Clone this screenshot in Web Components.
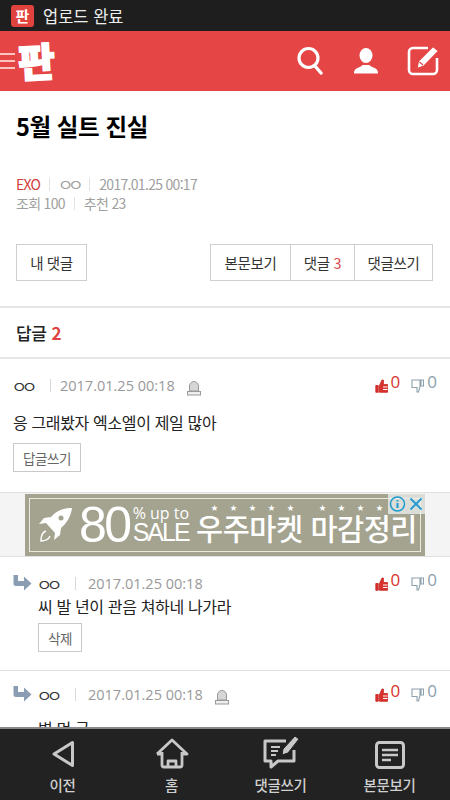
<!DOCTYPE html>
<html lang="ko">
<head>
<meta charset="utf-8">
<title>5월 실트 진실</title>
<style>
    html, body { margin: 0; padding: 0; background: #fff; }
    body { font-family: "Noto Sans CJK KR", "Noto Sans", sans-serif; }
    #page { display: flex; flex-direction: column; width: 450px; height: 800px; overflow: hidden; }
    #content { flex: 1; min-height: 0; overflow: hidden; }
</style>
</head>
<body>
<div id="page">
    <status-bar>업로드 완료</status-bar>
    <top-header></top-header>
    <div id="content">
        <post-head title-text="5월 실트 진실"></post-head>
        <post-tabs></post-tabs>
        <reply-title count="2">답글</reply-title>
        <comment-item date="2017.01.25 00:18" action="답글쓰기" alarm style="--top:17px;--body-gap:17px;--btn-gap:9px;--sep-left:15px;--date-gap:9px">응 그래봤자 엑소엘이 제일 많아</comment-item>
        <ad-banner></ad-banner>
        <comment-item nested date="2017.01.25 00:18" action="삭제" style="--top:17px;--body-gap:3px;--btn-gap:5px;--bottom:18px;--sep-left:15px;--date-gap:12px">씨 발 년이 관음 쳐하네 나가라</comment-item>
        <comment-item nested alarm date="2017.01.25 00:18" style="--top:14px;--body-gap:14px;--sep-left:15px;--date-gap:12px;border:0">병 먼 글</comment-item>
    </div>
    <bottom-nav></bottom-nav>
</div>

<script>
(function () {
    const icons = {
        search: '<svg width="26" height="30" viewBox="0 0 26 30"><circle cx="11.500" cy="12" r="9.500" fill="none" stroke="#fff" stroke-width="3.200"/><path d="M18 20l6 7" stroke="#fff" stroke-width="3.400" stroke-linecap="round"/></svg>',
        user: '<svg width="26" height="26" viewBox="0 0 26 26"><ellipse cx="13" cy="7.500" rx="6.500" ry="7.500" fill="#fff"/><path d="M1 25.500c0-1 0-3.500 2.500-5 3-1.600 5-1.600 6-3.500h7c1 1.900 3 1.900 6 3.500 2.500 1.500 2.500 4 2.500 5z" fill="#fff"/></svg>',
        write: '<svg width="32" height="30" viewBox="0 0 32 30"><path d="M21 2H6a4 4 0 0 0-4 4v18a4 4 0 0 0 4 4h20a4 4 0 0 0 4-4V12" fill="none" stroke="#fff" stroke-width="2.600"/><path d="M26 .5l5.500 4.500L17 20l-7 2.500 1.500-7.500z" fill="#fff" stroke="#e54545" stroke-width="1.200"/><path d="M12.500 16l3.500 3" stroke="#e54545" stroke-width="1.200"/></svg>',
        back: '<svg width="24" height="30" viewBox="0 0 24 30"><path d="M21.500 3.500v23L3 15z" fill="none" stroke="#c8c8c8" stroke-width="3" stroke-linejoin="round"/></svg>',
        home: '<svg width="34" height="31" viewBox="0 0 34 31"><path d="M2 16L17 2l15 14H27M7 16H2M7 14v13a2 2 0 0 0 2 2h16a2 2 0 0 0 2-2V14M13 29v-6h8v6" fill="none" stroke="#c8c8c8" stroke-width="2.800" stroke-linejoin="round"/></svg>',
        comment: '<svg width="38" height="34" viewBox="0 0 38 34"><path d="M24 6H3v20h6v6l7-6h16V15" fill="none" stroke="#c8c8c8" stroke-width="3" stroke-linejoin="round"/><path d="M9 12h9M9 16h7M9 20h5" stroke="#c8c8c8" stroke-width="2"/><path d="M33 1l4 3-11 14-6 2 1-6z" fill="#c8c8c8" stroke="#222" stroke-width="1"/></svg>',
        article: '<svg width="30" height="28" viewBox="0 0 30 28"><rect x="1.500" y="1.500" width="27" height="25" rx="3" fill="none" stroke="#c8c8c8" stroke-width="3"/><path d="M7 9h16M7 14h16M7 19h9" stroke="#c8c8c8" stroke-width="2.500"/></svg>',
        reply: '<svg width="19" height="16" viewBox="0 0 19 16"><path d="M.5 0H5v6h6V1.500l7.500 7-7.500 7V11H3a2.500 2.500 0 0 1-2.500-2.500z" fill="#8a9db3"/></svg>',
        alarm: '<svg width="14" height="16" viewBox="0 0 14 16"><path d="M2.500 11V6a4.500 4.500 0 0 1 9 0v5z" fill="#d6d6d6" stroke="#9a9a9a"/><rect x="0.500" y="11.500" width="13" height="3.500" fill="#eee" stroke="#9a9a9a"/></svg>',
        up: '<svg width="13" height="14" viewBox="0 0 13 14"><path d="M.8 6.500h2.500v6.800H.8zM4.500 6.500L7 1h1.400v4.500H12.500v7.800H4.500z" fill="#d9332e" stroke="#c8241f" stroke-width=".8"/><path d="M8 8h4.500M8 10.500h4.500" stroke="#fff"/></svg>',
        down: '<svg width="13" height="14" viewBox="0 0 13 14"><path d="M1 1h8v6.500L7.500 13H6V8.500H1zM10 1h2.500v6H10z" fill="none" stroke="#8da0ac" stroke-width="1.100"/></svg>'
    };

    const ovalCss = `
        .oo { display: inline-block; width: 22px; font-family: "Noto Sans CJK KR", sans-serif; font-size: 17px; line-height: 1; letter-spacing: -5.500px; text-indent: -1.500px; transform: scaleY(.8); white-space: nowrap; }
    `;

    function define(name, css, html) {
        customElements.define(name, class extends HTMLElement {
            connectedCallback() {
                if (this.shadowRoot) return;
                const root = this.attachShadow({ mode: 'open' });
                const markup = typeof html === 'function' ? html(this) : html;
                root.innerHTML = `<style>${css}</style>${markup}`;
            }
        });
    }

    define('status-bar', `
        :host { display: flex; align-items: center; gap: 9px; height: 31px; padding-left: 11px; background: #1e1e1e; color: #eee; font-size: 16.500px; flex: none; box-sizing: border-box; }
        .app { display: flex; align-items: center; justify-content: center; width: 23px; height: 22px; border-radius: 3px; background: #e0433d; color: #fff; font-size: 15px; font-weight: 700; line-height: 1; }
    `, `<span class="app">판</span><slot></slot>`);

    define('top-header', `
        :host { display: flex; align-items: center; height: 60px; background: #e54545; flex: none; }
        .menu { display: flex; flex-direction: column; gap: 5px; width: 15px; }
        .menu i { display: block; height: 2px; background: #f8c4c0; }
        .logo { margin: -2px 0 0 3px; color: #fff; font-size: 40px; font-weight: 900; line-height: 1; transform: rotate(-3deg); -webkit-text-stroke: 1.500px #fff; }
        .right { display: flex; align-items: center; margin-left: auto; padding-right: 11px; }
        .right span { display: flex; }
        .s { margin-right: 30px; }
        .u { margin-right: 28px; }
    `, `<div class="menu"><i></i><i></i><i></i></div><div class="logo">판</div>
        <div class="right"><span class="s">${icons.search}</span><span class="u">${icons.user}</span><span>${icons.write}</span></div>`);

    define('post-head', `
        :host { display: block; padding: 17px 16px 0; color: #a0a0a0; font-size: 14px; letter-spacing: -.7px; }
        h1 { margin: 0; height: 36px; color: #000; font-size: 23.500px; font-weight: 700; line-height: 36px; letter-spacing: -.4px; }
        .meta { display: flex; align-items: center; height: 19px; line-height: 19px; }
        .first { margin-top: 31px; }
        .sep { width: 1px; height: 13px; margin: 0 9px; background: #e3e3e3; }
        .cat { color: #d33c3c; }
        ${ovalCss}
        .oo { width: 21px; }
    `, el => `<h1>${el.getAttribute('title-text')}</h1>
        <div class="meta first"><span class="cat">EXO</span><span class="sep"></span><span class="oo">ㅇㅇ</span><span class="sep"></span><span>2017.01.25 00:17</span></div>
        <div class="meta"><span>조회 100</span><span class="sep"></span><span>추천 23</span></div>`);

    define('post-tabs', `
        :host { display: flex; justify-content: space-between; margin-top: 31px; padding: 0 17px 25px 16px; border-bottom: 2px solid #e6e6e6; font-size: 14.500px; color: #333; letter-spacing: -.4px; }
        .group { display: flex; border: 1px solid #cfcfcf; height: 37px; box-sizing: border-box; }
        .group span { display: flex; align-items: center; justify-content: center; height: 100%; box-sizing: border-box; }
        .group span + span { border-left: 1px solid #cfcfcf; }
        b { font-weight: 400; color: #d84a4a; margin-left: 4px; }
    `, `<div class="group"><span style="width:69px">내 댓글</span></div>
        <div class="group"><span style="width:79px">본문보기</span><span style="width:64px">댓글<b>3</b></span><span style="width:78px">댓글쓰기</span></div>`);

    define('reply-title', `
        :host { display: flex; align-items: center; height: 49px; padding-left: 16px; border-bottom: 2px solid #e6e6e6; color: #222; font-size: 17px; font-weight: 500; letter-spacing: -.4px; }
        b { margin-left: 5px; color: #e04343; font-weight: 700; }
    `, el => `<slot></slot><b>${el.getAttribute('count')}</b>`);

    define('comment-item', `
        :host { display: block; padding: var(--top, 18px) 13px var(--bottom, 20px) 13px; border-bottom: 1px solid #e0e0e0; }
        .head { display: flex; align-items: center; height: 18px; color: #999; font-family: "Open Sans", "Noto Sans", sans-serif; font-size: 14.500px; }
        .nick { color: #333; }
        .sep { width: 1px; height: 13px; margin: 0 var(--date-gap, 12px) 0 var(--sep-left, 10px); background: #d8d8d8; }
        .alarm { display: flex; margin: 5px 0 0 12px; }
        .reply { display: flex; margin-right: 6px; }
        .votes { display: flex; align-items: flex-start; margin-left: auto; gap: 11px; font-size: 17px; line-height: 18px; margin-top: -5px; }
        .votes span { display: flex; gap: 3px; }
        .votes svg { margin-top: 6px; }
        .up { color: #d9332e; }
        .down { color: #8da0ac; }
        .text { margin-top: var(--body-gap, 25px); color: #222; font-size: 16px; line-height: 23px; letter-spacing: -.35px; white-space: nowrap; }
        .btn { display: flex; align-items: center; justify-content: center; width: fit-content; height: 29px; margin-top: var(--btn-gap, 9px); padding: 0 9px; border: 1px solid #c9c9c9; box-sizing: border-box; color: #666; font-size: 13.500px; letter-spacing: -.4px; }
        :host([nested]) .wrap { padding-left: 25px; }
        ${ovalCss}
    `, el => {
        const nested = el.hasAttribute('nested');
        const action = el.getAttribute('action');
        return `<div class="head">${nested ? `<span class="reply">${icons.reply}</span>` : ''}
            <span class="nick oo">ㅇㅇ</span><span class="sep"></span><span>${el.getAttribute('date')}</span>
            ${el.hasAttribute('alarm') ? `<span class="alarm">${icons.alarm}</span>` : ''}
            <div class="votes"><span class="up">${icons.up}0</span><span class="down">${icons.down}0</span></div></div>
            <div class="wrap"><div class="text"><slot></slot></div>
            ${action ? `<span class="btn">${action}</span>` : ''}</div>`;
    });

    define('ad-banner', `
        :host { display: block; height: 64px; padding: 1px 25px 0; background: #f4f4f4; border-bottom: 1px solid #e0e0e0; box-sizing: border-box; }
        .ad { position: relative; height: 62px; padding: 4px; background: #a3a38f; box-sizing: border-box; }
        .inner { display: flex; align-items: center; height: 54px; border: 1px solid #e9e9dc; box-sizing: border-box; color: #fff; overflow: hidden; white-space: nowrap; }
        .rocket { display: flex; margin: 2px 0 0 8px; flex: none; }
        .num { margin-left: 6px; font-family: "Liberation Sans", sans-serif; font-size: 50px; line-height: 1; letter-spacing: -2.500px; }
        .off { display: flex; flex-direction: column; margin-left: 3px; font-family: "Open Sans", sans-serif; line-height: 1; }
        .off span:first-child { font-size: 16px; }
        .off span:last-child { font-size: 25px; margin-top: -1px; font-family: "Liberation Sans", sans-serif; letter-spacing: -2px; }
        .copy { margin-left: 7px; font-size: 29.500px; font-weight: 500; line-height: 1; letter-spacing: -.5px; margin-top: 6px; }
        .stars { position: absolute; left: 186px; top: 8px; display: flex; gap: 12px; color: #fff; font-size: 7px; line-height: 10px; }
        .stars i { font-style: normal; }
        .stars i:nth-child(6) { margin-left: 13px; }
        .choice { position: absolute; top: 0; right: 0; display: flex; align-items: center; height: 20px; background: rgba(236,240,240,.75); }
    `, `<div class="ad"><div class="inner">
            <span class="rocket"><svg width="35" height="38" viewBox="0 0 35 38"><path d="M34 1C25 1 18 4 13 10l-7 1-5 6 7-1 9 10-1 7 6-5 1-7c6-5 10-12 11-20z" fill="#fff"/><circle cx="23" cy="11" r="2.500" fill="#a3a38f"/><path d="M8 24c-3 1-5 5-5 10 4 0 8-2 9-5" fill="none" stroke="#fff" stroke-width="1.500"/></svg></span>
            <span class="num">80</span><span class="off"><span>% up to</span><span>SALE</span></span>
            <span class="copy">우주마켓 마감정리</span></div>
            <div class="stars"><i>★</i><i>★</i><i>★</i><i>★</i><i>★</i><i>★</i><i>★</i><i>★</i><i>★</i></div>
            <div class="choice">
                <svg width="19" height="20" viewBox="0 0 19 20"><circle cx="9.500" cy="10" r="7" fill="none" stroke="#1f9bcf" stroke-width="1.500"/><path d="M9.500 9v5M9.500 6v1.600" stroke="#1f9bcf" stroke-width="2"/></svg>
                <svg width="18" height="20" viewBox="0 0 18 20"><path d="M3.500 4.500l11 11M14.500 4.500l-11 11" stroke="#1f9bcf" stroke-width="1.800"/></svg>
            </div></div>`);

    define('bottom-nav', `
        :host { display: grid; grid-template-columns: repeat(4, 109px); height: 73px; padding-left: 8px; flex: none; background: #222; border-top: 2px solid #8a8a8a; box-sizing: border-box; color: #d0d0d0; font-size: 14.500px; font-weight: 500; }
        a { display: flex; flex-direction: column; align-items: center; }
        .i { display: flex; align-items: flex-end; height: 40px; }
        .l { margin-top: 5px; line-height: 22px; letter-spacing: -.3px; }
    `, `<a><span class="i">${icons.back}</span><span class="l">이전</span></a>
        <a><span class="i">${icons.home}</span><span class="l">홈</span></a>
        <a><span class="i">${icons.comment}</span><span class="l">댓글쓰기</span></a>
        <a><span class="i">${icons.article}</span><span class="l">본문보기</span></a>`);
}());
</script>
</body>
</html>
